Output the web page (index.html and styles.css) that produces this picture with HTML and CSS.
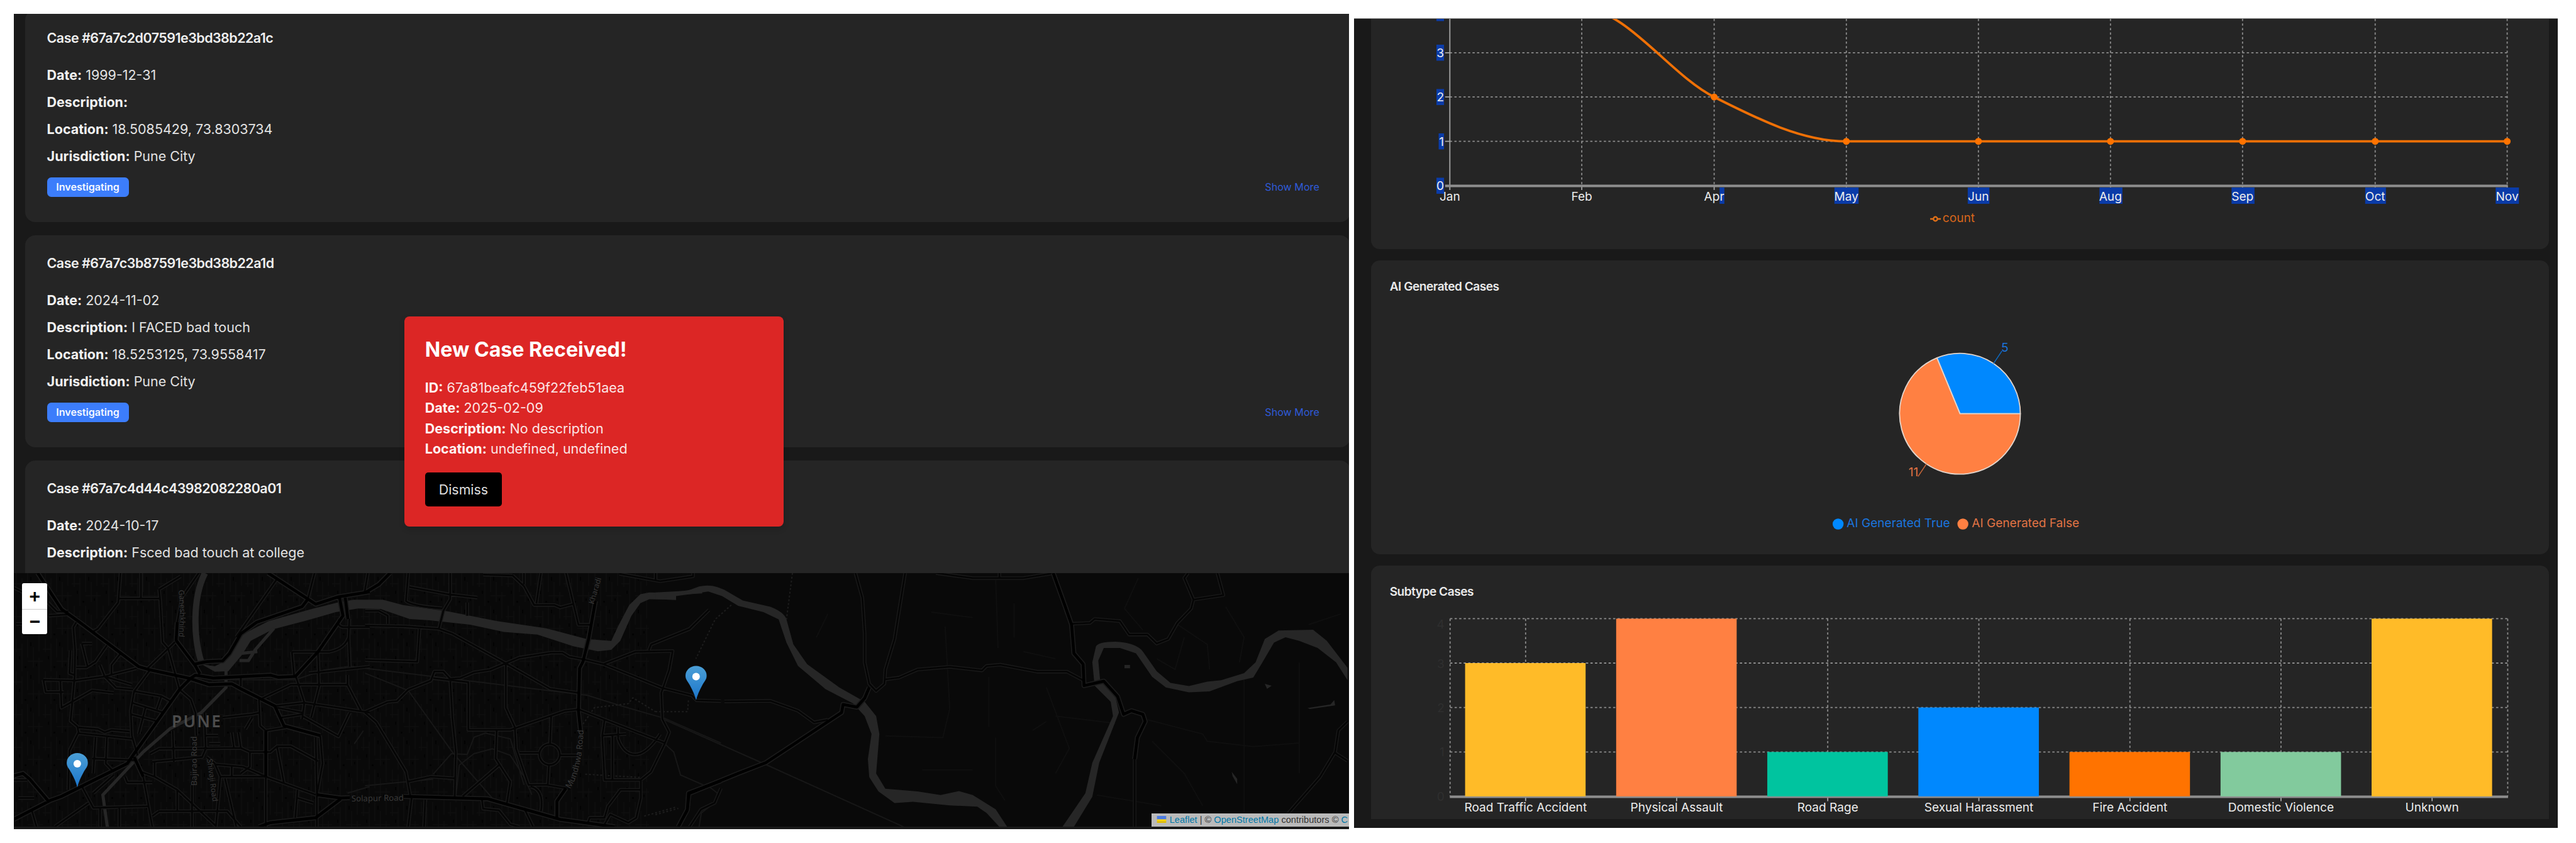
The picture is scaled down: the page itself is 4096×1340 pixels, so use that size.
FILE: index.html
```html
<!DOCTYPE html>
<html lang="en">
<head>
<meta charset="utf-8">
<title>Case dashboard</title>
<link rel="stylesheet" href="styles.css">
</head>
<body>
<main class="board">
  <section class="panel panel-cases">
    <div class="case-list">
      <article class="case">
        <h3 class="case-title">Case #67a7c2d07591e3bd38b22a1c</h3>
        <p class="row"><b>Date:</b> 1999-12-31</p>
        <p class="row"><b>Description:</b></p>
        <p class="row"><b>Location:</b> 18.5085429, 73.8303734</p>
        <p class="row"><b>Jurisdiction:</b> Pune City</p>
        <div class="case-foot"><span class="badge">Investigating</span><a class="more">Show More</a></div>
      </article>
      <article class="case">
        <h3 class="case-title">Case #67a7c3b87591e3bd38b22a1d</h3>
        <p class="row"><b>Date:</b> 2024-11-02</p>
        <p class="row"><b>Description:</b> I FACED bad touch</p>
        <p class="row"><b>Location:</b> 18.5253125, 73.9558417</p>
        <p class="row"><b>Jurisdiction:</b> Pune City</p>
        <div class="case-foot"><span class="badge">Investigating</span><a class="more">Show More</a></div>
      </article>
      <article class="case">
        <h3 class="case-title">Case #67a7c4d44c43982082280a01</h3>
        <p class="row"><b>Date:</b> 2024-10-17</p>
        <p class="row"><b>Description:</b> Fsced bad touch at college</p>
      </article>
    </div>

    <div class="map">
      <svg class="map-canvas" viewBox="0 0 2122.3 403.4" preserveAspectRatio="none">
        <defs>
          <pattern id="blocks" width="46" height="52" patternUnits="userSpaceOnUse">
            <path d="M4 0V22M13 8V52M22 0V30M31 14V46M40 0V20M40 30V52M0 17H14M22 36H46" stroke="#0e0e0e" stroke-width="1.3" fill="none"/>
            <path d="M8 28h2v5h-2zM26 6h2v6h-2zM35 40h2v4h-2zM17 44h3v3h-3z" fill="#030303"/>
          </pattern>
          <linearGradient id="pinfill" x1="0" y1="0" x2="0" y2="1">
            <stop offset="0" stop-color="#4b9fd6"/><stop offset="1" stop-color="#1b75cb"/>
          </linearGradient>
          <g id="pin">
            <path d="M0 0C-2-8-5-15-10-24C-14-31-16.8-33-16.8-39A16.8 15.5 0 0 1 16.8-39C16.8-33 14-31 10-24C5-15 2-8 0 0Z" fill="url(#pinfill)"/>
            <ellipse cx="0" cy="-37.5" rx="6" ry="6" fill="#fff"/>
          </g>
          <g id="major">
            <g transform="matrix(.3609 0 0 .2611 0 -2.8)">
              <path d="M105 10L210 230L290 310L550 580L600 600L770 650L860 690L960 685L1000 715L1150 820L1190 940L1350 1000M0 1510L160 1395L210 1370L500 1170L545 1080L730 720L780 650L800 632L880 650L1130 632L1165 645L1240 640L1340 490L1450 270L1435 160M1120 10L1330 200L1430 155L1568 125M1460 160L1472 290M720 310L715 420L800 575L820 625M795 565L850 550L920 545L950 500L1000 380L1070 310L1270 215L1295 170M1080 1555L1130 1530L1330 1500L1440 1385M0 1245L40 1230L70 1265L150 1395M1335 1360L1440 1380L1480 1378M530 1130L570 1250M1110 970V1250"/>
            </g>
            <g transform="matrix(.3609 0 0 .2611 558.5 -2.8)">
              <path d="M170 1370L540 1385L860 1510L1100 1555M1015 180L985 410L960 550L945 590L940 850L950 980M1568 1275L1425 1350L1420 1450L1380 1555M0 130L60 80L110 10M885 1320L845 1400L845 1500"/>
            </g>
            <g transform="matrix(.7313 0 0 .2849 1020.1 -17.7)">
              <path d="M865 62L890 240L905 350L910 510L930 570L932 690L975 665L1005 750L1018 850L1035 830L1060 850L1065 890L1048 980L1042 1100M465 700L455 760L438 810L408 795L405 840L240 1120L180 1180L75 1290"/>
            </g>
          </g>
          <g id="minor">
            <g transform="matrix(.3609 0 0 .2611 0 -2.8)">
              <path d="M275 310L262 340L270 480L268 640L250 910L280 945L285 980L245 1090L240 1330M600 600L530 730L515 850L520 1000L545 1120M570 1250L610 1555M1000 650V700M1160 45L980 400M470 10L460 190L370 350L345 370M460 165H640M560 10V160M640 110L645 180L655 430L680 470L710 620L730 720L780 780L800 860L805 1000M785 1300V1555M735 30L640 110M815 10L740 160L720 310M590 590L710 430M130 660L270 665L400 640L540 590M130 660L140 735H220M205 665L210 830L345 725L440 740M285 950L370 960L400 980L430 965L510 975M285 985L520 1020M360 1010L350 1230M410 1010L405 1170L440 1220M530 730L650 760L690 790M650 760L630 840M520 800L660 860M515 870L625 910M580 830L550 990M380 570L400 640L450 710L525 720M400 640L520 690M275 585H320L360 550L410 450M300 440H345M300 440L325 580M250 480L245 620L265 630M430 630V570L470 500M345 1140L540 1150"/>
              <path d="M1080 780L1085 940L1110 970L1200 950M1110 1250V1555M1085 780L1220 690L1470 690V630M1470 690L1530 850M1240 630L1280 800L1270 900M1340 490L1345 700L1310 890M1150 820L1280 800L1568 860M1270 880L1430 1005L1480 860M1160 830L1270 860M1180 890L1270 870M1225 490H1390Q1460 470 1475 400L1478 290M1225 490L1235 640M1475 400L1480 580M600 1110L640 1080L1000 1075L1040 1100H1130L1160 1065H1220L1340 1155M610 1160L830 1130L845 1080L840 860M850 1130L885 1170L910 1250L890 1555M885 1175L1010 1190L1110 1250L1330 1360M910 1250H1110M560 1220L620 1250L720 1330L890 1550M300 1310L350 1440L590 1430M380 1440V1555M465 1440V1555M330 1410L180 1555M80 1460L100 1555M700 970L705 1160M720 1330V1460M960 980L970 1080M990 980L1000 1075M920 890L1050 870L1085 860M1020 960L1050 890M640 1460H940L1000 1555M640 1460L610 1490M350 1350L440 1240M490 1250L500 1285H610M620 1160V1250M1160 1070L1190 1290M1250 1330L1240 1500M1250 1380L1320 1410M1350 1000L1360 1170L1335 1360L1335 1555M1330 1010L1335 1360M0 1270H60M20 1380H90M930 1260L980 1555M960 1180V1250M1040 1100V1190L1000 1230M840 1000H900M860 1050H910M0 100L60 140M10 320H50M150 190L190 245H240M155 270L240 262M1325 10L1295 170M1560 10L1545 130M1300 620L1568 580M1435 290Q1420 330 1450 340H1568"/>
            </g>
            <g transform="matrix(.3609 0 0 .2611 558.5 -2.8)">
              <path d="M0 330L180 335L325 350L385 380L620 560L815 715L940 740M375 10V170L345 240L325 350M190 10L180 180Q200 210 340 225M195 95L370 140L495 160M0 855L100 795L140 790L190 720L290 665L305 610H345L375 655L420 650L480 615L550 600L620 560L680 525L820 495H870L900 520L960 535L1050 565L1310 710L1440 755L1460 785L1568 790M375 655L385 900L400 1100L395 1370M300 650L455 675V965H640L880 850L940 840L1060 905L1320 1045M620 560V830L660 950L665 1080L720 1300H800L885 1320M0 860L50 920L180 1220L200 1370M820 880L815 1050M810 1180L805 1300M680 1105H765M860 1120H940M1050 565L1190 490L1355 485L1340 600L1305 740L1310 900L1340 980L1320 1050L1260 1220L1215 1270H1055L1045 1000L1055 905M1250 480L1260 445L1430 350L1515 235M885 10L940 325H990M650 25L700 90L745 205H835L860 220L915 200M775 10L755 195M700 10V80M520 20L650 25M1115 950V1020Q1140 1115 1190 1115T1300 990M1090 1000V1270M1045 1000L1150 990M1215 1270V1380L1195 1500L1160 1530L1080 1480L1055 1540M1215 1330H1125L1070 1430L1055 1500H990L980 1535M580 965L575 1140L640 1280L625 1410M590 1180L430 1370M190 1280L290 1250L395 1260M240 350L230 550L0 540M205 1380L190 1555M265 1390L260 1555M515 1390L520 1445L590 1455L640 1540L680 1555M1120 15L1300 60L1445 30V10M1280 10V50M0 240H60L100 270V320M450 190V270M1568 1320L1540 1410L1480 1450L1430 1555M700 1440L740 1555M730 1310Q790 1330 775 1460"/>
              <ellipse cx="813" cy="1115" rx="45" ry="63"/>
            </g>
            <g transform="matrix(.7313 0 0 .2849 1020.1 -17.7)">
              <path d="M435 62L450 200L455 400L455 560L465 680L480 720L498 680L500 600L520 430L543 62M500 655L530 645L570 600L640 585L710 605L720 580L750 573L830 612H895L930 660M905 345L945 340L955 318L1010 330L1030 405H1070L1090 455L1115 430L1135 340L1165 260L1170 210L1235 185L1222 62M1170 210L1150 90L1158 62M150 778L250 775L310 830L345 895L375 880M610 62L690 90H800L860 65M748 62V90M1042 1100V1478M1505 890L1485 940L1478 1060L1445 1200L1375 1405M1478 1065L1505 1110M75 1290L70 1390L50 1478"/>
            </g>
          </g>
        </defs>
        <rect width="1010" height="403.4" fill="url(#blocks)"/>
        <g class="rail">
          <path transform="matrix(.3609 0 0 .2611 558.5 -2.8)" d="M0 590L980 755L1130 820L1320 895L1568 1045M0 620L190 725L390 1110L560 1380M300 1235L380 1110L450 1115L480 1010L530 985L640 1020L700 1300M400 1370L415 1180L480 1110L560 1080L640 1120L700 1250L735 1360M1320 1050L1360 1100L1390 1240L1490 1300M0 1305L300 1265"/>
          <path transform="matrix(.7313 0 0 .2849 1020.1 -17.7)" d="M20 880L240 1130L540 1478M110 1240L135 1290L130 1340L100 1400L95 1478"/>
          <path class="dotted" transform="matrix(.7313 0 0 .2849 1020.1 -17.7)" d="M298 62L285 320M165 240L130 320L88 540M0 1410L50 1375M0 835H70L72 770"/>
          <path class="dotted" transform="matrix(.3609 0 0 .2611 558.5 -2.8)" d="M960 930L1010 830L1160 805L1180 770L1280 855M970 1235L1215 1255M1230 1490L1370 1435"/>
          <path transform="matrix(.3609 0 0 .2611 0 -2.8)" d="M1500 1050L1540 970M1240 660L1370 600L1480 578L1568 590M900 660H1240M1470 1350L1568 1310"/>
          <path class="faint" transform="matrix(.7313 0 0 .2849 1020.1 -17.7)" d="M600 280L690 310M630 360L640 820L625 980L500 970M740 100L745 480M725 640V920M740 980V1250L760 1330M780 230V420M800 500L870 540M850 700L900 1040L870 1180M1090 540L1130 600L1150 420M1130 340L1200 460L1205 600M1240 250L1280 420L1270 560M1070 880L1190 960L1200 1000L1300 1030L1400 1010M1080 1000L1150 1180L1190 1360M1280 620V1400M1400 560V1180M1420 350L1490 290M960 1300L1100 1360M870 860L1000 900M350 420L375 290M1050 90L1020 260L1060 380M580 1160H690M820 940L850 890"/>
        </g>
        <g class="water">
          <g transform="matrix(.7123 0 0 .2849 -22.3 -17.7)">
            <path class="fill" d="M450 570L480 582L505 550L520 480L545 400L600 330L700 260L755 225L790 210H855L900 240L1000 275L1110 330L1220 370L1310 430L1365 440L1380 360L1405 240L1430 180L1450 170L1500 172L1568 145V175L1505 185V210L1450 208L1430 230L1410 300L1385 440L1365 490L1335 498L1280 470L1200 405L1125 390L1050 350L960 325L915 318L870 280L850 262L800 260L750 280L680 330L610 375L560 440L540 520L510 610L480 612Z"/>
            <path class="w10" d="M458 62C430 200 432 420 450 560"/>
            <path class="w5" d="M612 370L570 490L555 550H535M540 510L575 500M505 600V700L450 840L380 930L320 1060L230 1300L240 1478"/>
          </g>
          <g transform="matrix(.7313 0 0 .2849 1020.1 -17.7)" class="fill">
            <path d="M0 170L70 160L95 137Q115 125 135 140L150 155L190 215L250 250Q280 280 285 320L300 460L330 570L400 700L455 780L480 860L487 960L480 1180L500 1265L570 1280L620 1300L660 1278L690 1300L740 1380L765 1478H748L720 1400L700 1365L640 1358L560 1338L520 1345L485 1280L465 1200L462 1100L470 960L455 860L430 790L370 710L310 580L285 450L268 320L235 280L180 245L145 190L115 165L75 180L45 190V212L0 207Z"/>
            <path d="M885 1478L935 1290L950 1120L995 860L990 780L955 690L950 560L958 470Q965 445 1000 445Q1045 450 1060 500L1090 610L1120 675L1160 692L1200 668L1230 660L1280 620L1305 560L1325 430L1355 382L1430 378L1460 440L1505 590V660L1480 560L1440 480L1400 440L1370 420L1345 450L1320 560L1300 645L1265 665L1205 722L1160 727L1110 700L1080 640L1045 510L1010 480H975L963 550L967 660L1000 750L1008 840L965 1120L950 1310L910 1478Z"/>
            <path d="M1020 575h12v18h-12zM1325 680l15 10l-10 18zM1418 815l50-20l8-25l2 30l-55 20zM1253 1170l12 40v30l-10-45z"/>
          </g>
        </g>
        <use href="#minor" class="minor-case"/>
        <use href="#major" class="major-case"/>
        <use href="#minor" class="minor-core"/>
        <use href="#major" class="major-core"/>
        <g class="map-text">
          <path id="t1" d="M262 27Q266 65 262 104" fill="none"/>
          <text class="road small"><textPath href="#t1">Ganeshkhind</textPath></text>
          <path id="t2" d="M291 338V248" fill="none"/>
          <text class="road"><textPath href="#t2">Bajirao Road</textPath></text>
          <path id="t3" d="M307 296L318 376" fill="none"/>
          <text class="road small"><textPath href="#t3">Shivaji Road</textPath></text>
          <path id="t4" d="M922 50L936 2" fill="none"/>
          <text class="road small"><textPath href="#t4">Kharadi</textPath></text>
          <path id="t5" d="M884 343Q903 318 906 248" fill="none"/>
          <text class="road"><textPath href="#t5">Mundhwa Road</textPath></text>
          <text class="road" x="537" y="363" transform="rotate(-1 537 363)">Solapur Road</text>
          <text class="city" x="251" y="245.500" textLength="78">PUNE</text>
        </g>
        <use href="#pin" x="100.900" y="340.500"/>
        <use href="#pin" x="1084.800" y="202"/>
      </svg>
      <div class="zoom"><span>+</span><span>−</span></div>
      <div class="credit">
        <svg class="flag" viewBox="0 0 16 12"><path fill="#4c7be1" d="M0 0h16v6H0z"/><path fill="#ffd500" d="M0 6h16v3H0z"/><path fill="#e0bc00" d="M0 9h16v3H0z"/></svg>
        <a>Leaflet</a> | © <a>OpenStreetMap</a> contributors © <a>C</a>
      </div>
    </div>

    <div class="alert">
      <h2 class="alert-title">New Case Received!</h2>
      <p><b>ID:</b> 67a81beafc459f22feb51aea</p>
      <p><b>Date:</b> 2025-02-09</p>
      <p><b>Description:</b> No description</p>
      <p><b>Location:</b> undefined, undefined</p>
      <button class="dismiss">Dismiss</button>
    </div>
  </section>

  <section class="panel panel-charts">
    <article class="chart chart-line">
      <svg viewBox="2180.2 30 1872.8 366.2">
        <path class="grid" d="M2305.500 83.800H3986.800M2305.500 154.200H3986.800M2305.500 224.700H3986.800M2515.300 30V295M2725.800 30V295M2936 30V295M3146 30V295M3356 30V295M3566 30V295M3776.900 30V295M3986.800 30V295"/>
        <path class="axis" d="M2305.500 30V302M2298 83.800H2305M2298 154.200H2305M2298 224.700H2305M2515.300 295V302M2725.800 295V302M2936 295V302M3146 295V302M3356 295V302M3566 295V302M3776.900 295V302M3986.800 295V302"/>
        <path class="base" d="M2298 295.400H3987.800"/>
        <g class="sel">
          <rect x="2284.200" y="30" width="12" height="3.500"/>
          <rect x="2284.200" y="71" width="12.100" height="25.500"/>
          <rect x="2284.200" y="141.500" width="12.100" height="25.500"/>
          <rect x="2287.700" y="212" width="8.600" height="25.500"/>
          <rect x="2284.200" y="282.500" width="12.100" height="25.500"/>
          <rect x="2734.400" y="298" width="7.600" height="26"/>
          <rect x="2917" y="298" width="38.500" height="26"/>
          <rect x="3129" y="298" width="34.500" height="26"/>
          <rect x="3338.500" y="298" width="36.500" height="26"/>
          <rect x="3548.500" y="298" width="36.500" height="26"/>
          <rect x="3761" y="298" width="33" height="26"/>
          <rect x="3968.500" y="298" width="37" height="26"/>
        </g>
        <path class="trend" d="M2515.300 13.400C2585.400 13.400 2655.500 118.950 2725.800 154.200C2795.800 189.450 2865.900 224.700 2936 224.700H3986.800"/>
        <g class="dots">
          <circle cx="2725.800" cy="154.200" r="5.500"/><circle cx="2936" cy="224.700" r="5.500"/><circle cx="3146" cy="224.700" r="5.500"/><circle cx="3356" cy="224.700" r="5.500"/><circle cx="3566" cy="224.700" r="5.500"/><circle cx="3776.900" cy="224.700" r="5.500"/><circle cx="3986.800" cy="224.700" r="5.500"/>
        </g>
        <g class="tick end"><text x="2296.300" y="91">3</text><text x="2296.300" y="161.500">2</text><text x="2296.300" y="232">1</text><text x="2296.300" y="302.500">0</text></g>
        <g class="tick mid"><text x="2305.500" y="318.600">Jan</text><text x="2515.300" y="318.600">Feb</text><text x="2725.800" y="318.600">Apr</text><text x="2936" y="318.600">May</text><text x="3146" y="318.600">Jun</text><text x="3356" y="318.600">Aug</text><text x="3566" y="318.600">Sep</text><text x="3776.900" y="318.600">Oct</text><text x="3986.800" y="318.600">Nov</text></g>
        <path class="key" d="M3069.300 348H3074.500M3080.800 348H3086.200"/><circle class="key" cx="3077.600" cy="348" r="3.200"/>
        <text class="legend count" x="3089" y="353.200">count</text>
      </svg>
    </article>

    <article class="chart chart-pie">
      <h4 class="chart-title">AI Generated Cases</h4>
      <svg viewBox="2180.2 486 1872.8 395.3">
        <path class="slice blue" d="M3116.700 657.600H3212.700A96 96 0 0 0 3080 568.900Z"/>
        <path class="slice orange" d="M3116.700 657.600L3080 568.900A96 96 0 1 0 3212.700 657.600Z"/>
        <path class="lead" stroke="#0e6cc4" d="M3170 577.800L3183.400 557.800"/>
        <path class="lead" stroke="#c9683a" d="M3063.400 737.400L3050 757.400"/>
        <text class="legend true" x="3182.200" y="558.600">5</text>
        <text class="legend false end" x="3050.500" y="756.800">11</text>
        <circle cx="2922.900" cy="833" r="8.700" fill="#0088fe"/>
        <text class="legend true" x="2936.500" y="838.200">AI Generated True</text>
        <circle cx="3121.300" cy="833" r="8.700" fill="#ff8042"/>
        <text class="legend false" x="3135.500" y="838.200">AI Generated False</text>
      </svg>
    </article>

    <article class="chart chart-bar">
      <h4 class="chart-title">Subtype Cases</h4>
      <svg viewBox="2180.2 971.4 1872.8 330.3">
        <path class="grid" d="M2305.900 983.800H3987.600M2305.900 1054.400H3987.600M2305.900 1125H3987.600M2305.900 1195.700H3987.600M2305.900 984V1266M2426 984V1266M2666.200 984V1266M2906.400 984V1266M3146.700 984V1266M3386.900 984V1266M3627.100 984V1266M3867.400 984V1266M3987.600 984V1266"/>
        <path class="axis" d="M2426 1268V1274M2666.200 1268V1274M2906.400 1268V1274M3146.700 1268V1274M3386.900 1268V1274M3627.100 1268V1274M3867.400 1268V1274"/>
        <path class="base" d="M2305.500 1267H3988.200"/>
        <rect x="2329.800" y="1054.400" width="191.600" height="211.900" fill="#ffbb28"/>
        <rect x="2570" y="983.800" width="191.600" height="282.500" fill="#ff8042"/>
        <rect x="2810.300" y="1195.700" width="191.600" height="70.600" fill="#00c49f"/>
        <rect x="3050.500" y="1125" width="191.600" height="141.300" fill="#0088fe"/>
        <rect x="3290.800" y="1195.700" width="191.600" height="70.600" fill="#ff7300"/>
        <rect x="3531" y="1195.700" width="191.600" height="70.600" fill="#82ca9d"/>
        <rect x="3771.200" y="983.800" width="191.600" height="282.500" fill="#ffbb28"/>
        <g class="tick end dim"><text x="2297" y="999.500">4</text><text x="2297" y="1062">3</text><text x="2297" y="1132">2</text><text x="2297" y="1202.700">1</text><text x="2297" y="1273.300">0</text></g>
        <g class="tick mid"><text x="2426" y="1290">Road Traffic Accident</text><text x="2666.200" y="1290">Physical Assault</text><text x="2906.400" y="1290">Road Rage</text><text x="3146.700" y="1290">Sexual Harassment</text><text x="3386.900" y="1290">Fire Accident</text><text x="3627.100" y="1290">Domestic Violence</text><text x="3867.400" y="1290">Unknown</text></g>
      </svg>
    </article>
  </section>
</main>
</body>
</html>
```
FILE: styles.css
```css
* { box-sizing: border-box; }
body {
  margin: 0;
  background: #fff;
  font-family: Inter, "Liberation Sans", sans-serif;
}
h2, h3, h4, p { margin: 0; }

.board {
  display: flex;
  align-items: flex-start;
  gap: 8.4px;
  width: 4096px;
  height: 1340px;
  padding: 22.2px 0 0 22.3px;
  overflow: hidden;
}
.panel {
  display: flex;
  flex-direction: column;
  overflow: hidden;
  background: #191919;
}

/* Case list */
.panel-cases {
  position: relative;
  width: 2122.3px;
  height: 1295.8px;
}
.case-list {
  display: flex;
  flex-direction: column;
  flex: none;
  gap: 20.9px;
  width: 2125px;
  height: 888.8px;
  padding-left: 18.1px;
  overflow: hidden;
}
.case {
  flex: none;
  height: 337.2px;
  padding: 28.6px 49.5px 0 34.2px;
  border-radius: 16px;
  background: #252525;
  color: #e2e2e2;
  font-size: 21.48px;
}
.case:first-child { margin-top: -6.7px; }
.case-title {
  margin-bottom: 22px;
  color: #efefef;
  font-size: 21.48px;
  font-weight: 600;
  line-height: 32px;
  letter-spacing: -0.025em;
}
.row { height: 43px; line-height: 43px; }
.row b { color: #f2f2f2; font-weight: 700; }
.case-foot {
  display: flex;
  align-items: center;
  justify-content: space-between;
  margin-top: 12.2px;
}
.badge {
  height: 30.7px;
  padding: 0 14.7px;
  border-radius: 6.5px;
  background: #3c7dfb;
  color: #f4f8ff;
  font-size: 16.1px;
  font-weight: 600;
  line-height: 30px;
}
.more { margin-top: -1px; color: #2f5bd8; font-size: 16.15px; }

/* Map */
.map {
  position: relative;
  flex: none;
  height: 403.4px;
  overflow: hidden;
  background: #090909;
}
.map-canvas { display: block; width: 2122.3px; height: 403.4px; }
.map-canvas path, .map-canvas ellipse { vector-effect: non-scaling-stroke; }
.minor-case, .major-case, .minor-core, .major-core {
  fill: none;
  stroke-linejoin: round;
}
.minor-case { stroke: #1a1a1a; stroke-width: 5.5px; }
.minor-core { stroke: #050505; stroke-width: 2.8px; }
.major-case { stroke: #1a1a1a; stroke-width: 8px; }
.major-core { stroke: #000; stroke-width: 4.6px; }
.rail { fill: none; stroke: #171717; stroke-width: 2px; }
.rail .dotted { stroke: #1d1d1d; stroke-dasharray: 3 3; }
.rail .faint { stroke: #0f0f0f; }
.water { fill: none; stroke: #262626; }
.water .fill { fill: #262626; stroke: none; }
.water .w10 { stroke-width: 10px; }
.water .w5 { stroke-width: 5px; }
.map-text { fill: #383838; font-family: "Noto Sans", sans-serif; }
.road { font-size: 13.2px; }
.small { font-size: 12px; }
.city { fill: #4c4c4c; font-size: 26.2px; font-weight: 600; }

.zoom {
  position: absolute;
  top: 16.2px;
  left: 12.7px;
  width: 40.5px;
  height: 81px;
  border-radius: 3px;
  overflow: hidden;
  background: #fff;
}
.zoom span {
  display: block;
  height: 40.5px;
  color: #000;
  font: bold 30px/46px "Liberation Mono", monospace;
  text-align: center;
}
.zoom span + span { border-top: 1.5px solid #ccc; line-height: 43px; }
.credit {
  position: absolute;
  left: 1808.4px;
  bottom: 0;
  width: 330px;
  height: 21px;
  padding-left: 8px;
  background: #bababa;
  color: #333;
  font: 14.6px/21px "Liberation Sans", sans-serif;
  white-space: nowrap;
}
.credit a { color: #0078a8; }
.flag { width: 16px; height: 11px; margin-right: 1px; }

/* New case alert */
.alert {
  position: absolute;
  top: 480.6px;
  left: 621.2px;
  width: 602.5px;
  height: 334.5px;
  padding: 35.4px 32.3px 0;
  border-radius: 8px;
  background: #dc2625;
  box-shadow: 0 4px 10px rgba(0, 0, 0, .15);
  color: #fbe4e4;
  font-size: 21.5px;
}
.alert-title {
  margin-bottom: 25.7px;
  color: #fff;
  font-size: 32.15px;
  font-weight: 700;
  line-height: 36px;
}
.alert p { line-height: 32.4px; }
.alert b { color: #fff2f2; font-weight: 700; }
.dismiss {
  display: block;
  width: 122.3px;
  height: 54px;
  margin-top: 21.3px;
  padding: 0;
  border: 0;
  border-radius: 5px;
  background: #000;
  color: #dfdfdf;
  font: 21.4px Inter, sans-serif;
}

/* Charts */
.panel-charts {
  gap: 18px;
  width: 1913.8px;
  height: 1287px;
  margin-top: 6.8px;
  padding: 0 13.8px 0 27.2px;
  border-top: 1px solid #7d7d7d;
}
.chart {
  display: flex;
  flex-direction: column;
  flex: none;
  border-radius: 14px;
  overflow: hidden;
  background: #252525;
}
.chart svg { display: block; width: 100%; }
.chart-line { height: 366.2px; border-radius: 0 0 14px 14px; }
.chart-pie { height: 467.3px; }
.chart-bar { height: 402.3px; border-radius: 14px 14px 0 0; }
.chart-title {
  flex: none;
  height: 72px;
  padding: 26px 0 0 29.5px;
  color: #e9e9e9;
  font-size: 19.1px;
  font-weight: 600;
  line-height: 30px;
  letter-spacing: -0.026em;
}
.grid {
  fill: none;
  stroke: #8c8c8c;
  stroke-width: 1.8px;
  stroke-dasharray: 3.6 3.6;
}
.axis { fill: none; stroke: #a5a5a5; stroke-width: 1.8px; }
.base { fill: none; stroke: #8e8e8e; stroke-width: 4px; }
.sel { fill: #0a3ba8; }
.trend { fill: none; stroke: #ef7006; stroke-width: 3.8px; }
.dots { fill: #ff7300; }
.tick, .legend { fill: #ececec; font-size: 19.1px; }
.dim { fill: #2f2f2f; }
.mid { text-anchor: middle; }
.end { text-anchor: end; }
.key { fill: none; stroke: #e07018; stroke-width: 2.4px; }
.count { fill: #d8661b; }
.true { fill: #1b74dc; }
.false { fill: #e07344; }
.slice { stroke: #e3d5cc; stroke-width: 1.8px; stroke-linejoin: round; }
.blue { fill: #0088fe; }
.orange { fill: #ff8042; }
.lead { fill: none; stroke-width: 1.5px; }
```
